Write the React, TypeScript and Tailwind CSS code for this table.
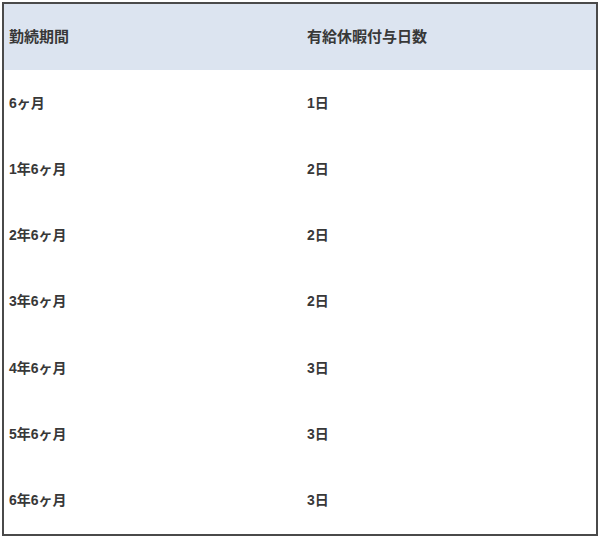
const rows = [
  ['6ヶ月', '1日'],
  ['1年6ヶ月', '2日'],
  ['2年6ヶ月', '2日'],
  ['3年6ヶ月', '2日'],
  ['4年6ヶ月', '3日'],
  ['5年6ヶ月', '3日'],
  ['6年6ヶ月', '3日'],
];

export default function App() {
  return (
    <div
      className="w-[600px] h-[538px] bg-white pl-[2px] pt-[2px]"
      style={{ fontFamily: '"Liberation Sans", "Noto Sans CJK JP", sans-serif' }}
    >
      <div className="w-[596px] h-[534px] border-2 border-[#4a4a4a] flex flex-col text-[#383838] font-semibold">
        <div className="grid grid-cols-[298px_1fr] h-[66px] items-center bg-[#dce4f0] text-[15px]">
          <div className="pl-[5px]">勤続期間</div>
          <div className="pl-[5px]">有給休暇付与日数</div>
        </div>
        {rows.map(([period, days]) => (
          <div key={period} className="grid grid-cols-[298px_1fr] flex-1 items-center text-[14px]">
            <div className="pl-[5px]">{period}</div>
            <div className="pl-[5px]">{days}</div>
          </div>
        ))}
      </div>
    </div>
  );
}
